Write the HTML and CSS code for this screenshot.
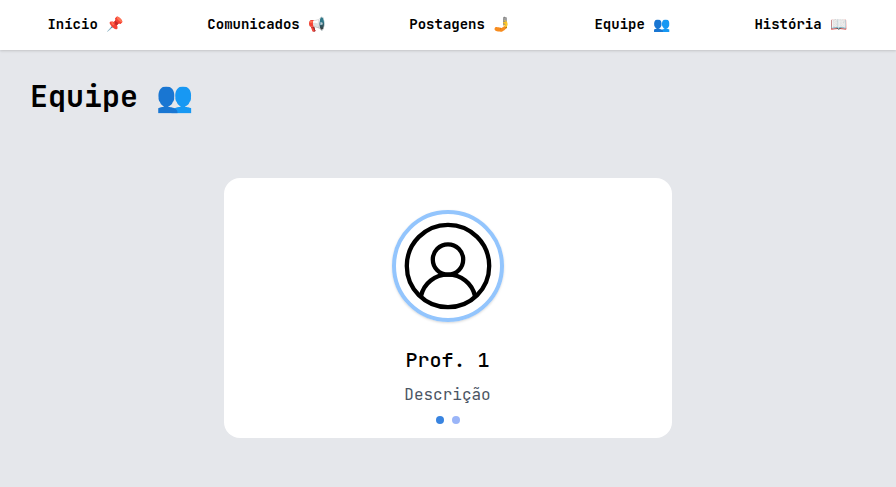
FILE: index.html
```html
<!DOCTYPE html>
<html lang="pt-BR"><head><meta charset="utf-8"><title>Equipe</title><link rel="stylesheet" href="styles.css"></head>
<body>
<nav class="nav"><a>Início 📌</a><a>Comunicados 📢</a><a>Postagens 🤳</a><a>Equipe 👥</a><a>História 📖</a></nav>
<main><h1 class="title">Equipe 👥</h1>
<section class="card">
<div class="avatar"><svg viewBox="0 0 104 104" fill="none" stroke="#000" stroke-width="4.3"><circle cx="52" cy="52" r="41.2"/><circle cx="52" cy="45.5" r="15.2"/><path d="M25 82c3-13 14-21.3 27-21.3S76 69 79 82"/></svg></div>
<h2 class="name">Prof. 1</h2><p class="desc">Descrição</p>
<div class="dots"><span class="dot active"></span><span class="dot"></span></div>
</section></main></body></html>
```
FILE: styles.css
```css
*{box-sizing:border-box;margin:0}
body{background:#e5e7eb;font-family:"JetBrains Mono","DejaVu Sans Mono",monospace;color:#000}
.nav{height:50px;background:#fff;display:flex;justify-content:space-between;align-items:center;padding:0 49px 2px 47.4px;font-size:14px;line-height:20px;font-weight:600;box-shadow:0 1px 3px #0000001a,0 1px 2px #0000000f}
.title{font-size:30px;line-height:36px;font-weight:600;padding:28px 30px}
.card{width:448px;height:260px;margin:36px auto 0;background:#fff;border-radius:16px;padding-top:32px;display:flex;flex-direction:column;align-items:center}
.avatar{width:112px;height:112px;border:4px solid #93c5fd;border-radius:50%;box-shadow:0 1px 3px #0000001a,0 1px 2px #0000000f}
.avatar svg{display:block}
.name{font-size:20px;line-height:28px;margin-top:24px;margin-right:1px;font-weight:500}
.desc{font-size:16px;line-height:24px;margin-top:9px;margin-right:1px;color:#4b5563}
.dots{display:flex;gap:8px;margin-top:9px}
.dot{width:8px;height:8px;border-radius:50%;background:#9ab5f8}
.active{background:#3884e0}
```
